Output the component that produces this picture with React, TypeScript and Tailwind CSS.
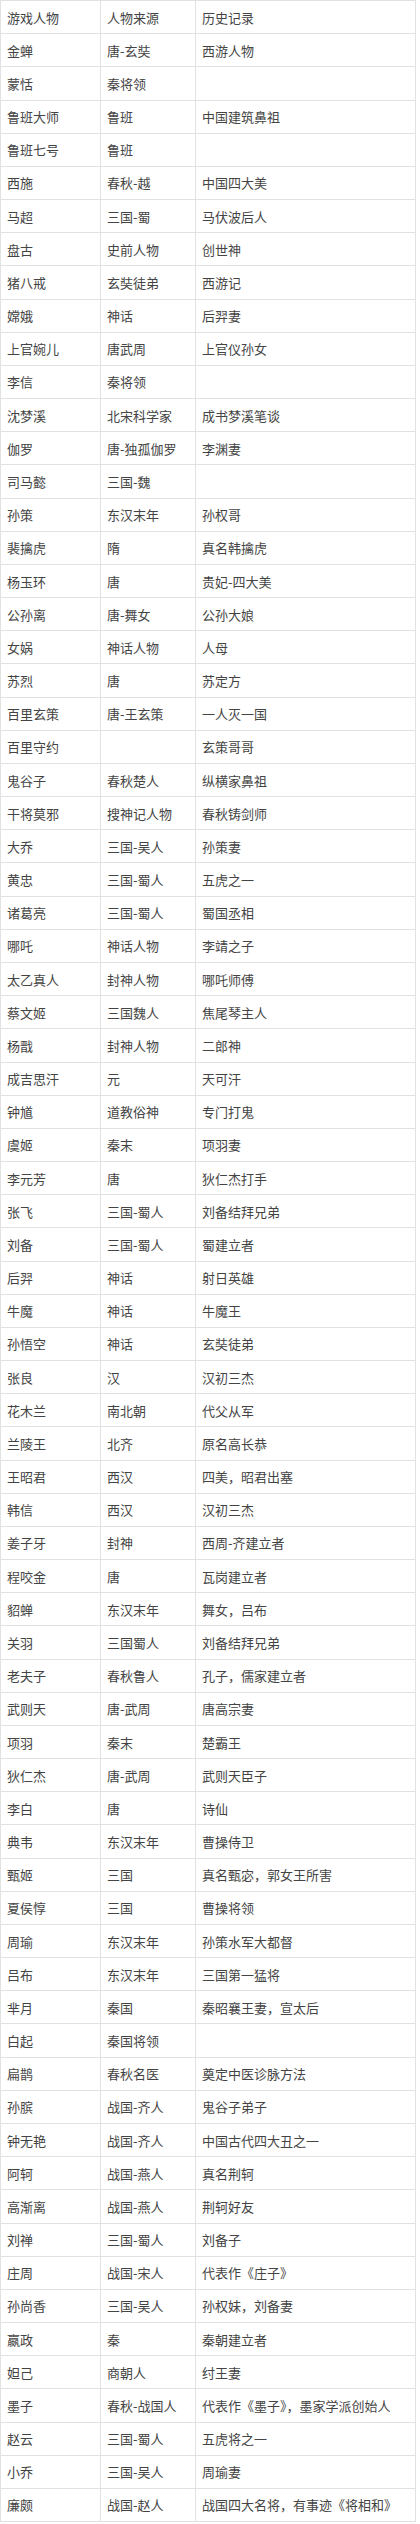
import React from "react";

const rows: [string, string, string][] = [
  ["游戏人物", "人物来源", "历史记录"],
  ["金蝉", "唐-玄奘", "西游人物"],
  ["蒙恬", "秦将领", ""],
  ["鲁班大师", "鲁班", "中国建筑鼻祖"],
  ["鲁班七号", "鲁班", ""],
  ["西施", "春秋-越", "中国四大美"],
  ["马超", "三国-蜀", "马伏波后人"],
  ["盘古", "史前人物", "创世神"],
  ["猪八戒", "玄奘徒弟", "西游记"],
  ["嫦娥", "神话", "后羿妻"],
  ["上官婉儿", "唐武周", "上官仪孙女"],
  ["李信", "秦将领", ""],
  ["沈梦溪", "北宋科学家", "成书梦溪笔谈"],
  ["伽罗", "唐-独孤伽罗", "李渊妻"],
  ["司马懿", "三国-魏", ""],
  ["孙策", "东汉末年", "孙权哥"],
  ["裴擒虎", "隋", "真名韩擒虎"],
  ["杨玉环", "唐", "贵妃-四大美"],
  ["公孙离", "唐-舞女", "公孙大娘"],
  ["女娲", "神话人物", "人母"],
  ["苏烈", "唐", "苏定方"],
  ["百里玄策", "唐-王玄策", "一人灭一国"],
  ["百里守约", "", "玄策哥哥"],
  ["鬼谷子", "春秋楚人", "纵横家鼻祖"],
  ["干将莫邪", "搜神记人物", "春秋铸剑师"],
  ["大乔", "三国-吴人", "孙策妻"],
  ["黄忠", "三国-蜀人", "五虎之一"],
  ["诸葛亮", "三国-蜀人", "蜀国丞相"],
  ["哪吒", "神话人物", "李靖之子"],
  ["太乙真人", "封神人物", "哪吒师傅"],
  ["蔡文姬", "三国魏人", "焦尾琴主人"],
  ["杨戬", "封神人物", "二郎神"],
  ["成吉思汗", "元", "天可汗"],
  ["钟馗", "道教俗神", "专门打鬼"],
  ["虞姬", "秦末", "项羽妻"],
  ["李元芳", "唐", "狄仁杰打手"],
  ["张飞", "三国-蜀人", "刘备结拜兄弟"],
  ["刘备", "三国-蜀人", "蜀建立者"],
  ["后羿", "神话", "射日英雄"],
  ["牛魔", "神话", "牛魔王"],
  ["孙悟空", "神话", "玄奘徒弟"],
  ["张良", "汉", "汉初三杰"],
  ["花木兰", "南北朝", "代父从军"],
  ["兰陵王", "北齐", "原名高长恭"],
  ["王昭君", "西汉", "四美，昭君出塞"],
  ["韩信", "西汉", "汉初三杰"],
  ["姜子牙", "封神", "西周-齐建立者"],
  ["程咬金", "唐", "瓦岗建立者"],
  ["貂蝉", "东汉末年", "舞女，吕布"],
  ["关羽", "三国蜀人", "刘备结拜兄弟"],
  ["老夫子", "春秋鲁人", "孔子，儒家建立者"],
  ["武则天", "唐-武周", "唐高宗妻"],
  ["项羽", "秦末", "楚霸王"],
  ["狄仁杰", "唐-武周", "武则天臣子"],
  ["李白", "唐", "诗仙"],
  ["典韦", "东汉末年", "曹操侍卫"],
  ["甄姬", "三国", "真名甄宓，郭女王所害"],
  ["夏侯惇", "三国", "曹操将领"],
  ["周瑜", "东汉末年", "孙策水军大都督"],
  ["吕布", "东汉末年", "三国第一猛将"],
  ["芈月", "秦国", "秦昭襄王妻，宣太后"],
  ["白起", "秦国将领", ""],
  ["扁鹊", "春秋名医", "奠定中医诊脉方法"],
  ["孙膑", "战国-齐人", "鬼谷子弟子"],
  ["钟无艳", "战国-齐人", "中国古代四大丑之一"],
  ["阿轲", "战国-燕人", "真名荆轲"],
  ["高渐离", "战国-燕人", "荆轲好友"],
  ["刘禅", "三国-蜀人", "刘备子"],
  ["庄周", "战国-宋人", "代表作《庄子》"],
  ["孙尚香", "三国-吴人", "孙权妹，刘备妻"],
  ["嬴政", "秦", "秦朝建立者"],
  ["妲己", "商朝人", "纣王妻"],
  ["墨子", "春秋-战国人", "代表作《墨子》，墨家学派创始人"],
  ["赵云", "三国-蜀人", "五虎将之一"],
  ["小乔", "三国-吴人", "周瑜妻"],
  ["廉颇", "战国-赵人", "战国四大名将，有事迹《将相和》"],
];

export default function App() {
  return (
    <div className="bg-white w-[420px] font-['Noto_Sans_CJK_SC',sans-serif] text-[13px] text-[#444]">
      <div className="grid grid-cols-[100px_95px_220px] w-fit border-l border-t border-[#e2e2e2]">
        {rows.map((r, i) =>
          r.map((cell, j) => (
            <div
              key={`${i}-${j}`}
              className="h-[33.18px] flex items-center px-[6px] border-r border-b border-[#e2e2e2] whitespace-nowrap leading-none"
            >
              {cell}
            </div>
          ))
        )}
      </div>
    </div>
  );
}
